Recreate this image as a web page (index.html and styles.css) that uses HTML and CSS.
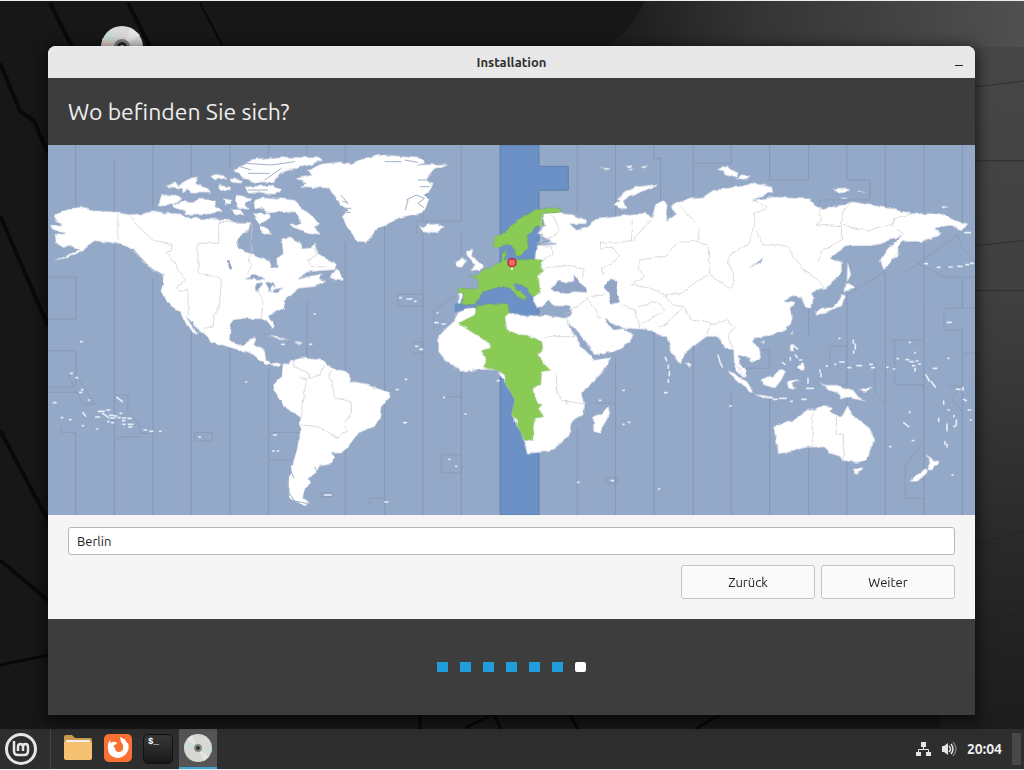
FILE: index.html
```html
<!DOCTYPE html>
<html lang="de">
<head>
<meta charset="utf-8">
<meta name="viewport" content="width=device-width, initial-scale=1">
<title>Installation</title>
<link rel="stylesheet" href="styles.css">
</head>
<body>
<main class="desktop">
  <svg class="wallpaper" viewBox="0 0 1024 729" preserveAspectRatio="none" aria-hidden="true">
    <defs>
      <linearGradient id="sheen" x1="0" y1="0" x2="0" y2="1">
        <stop offset="0" stop-color="#484848"/><stop offset=".4" stop-color="#404040"/><stop offset=".75" stop-color="#292929"/><stop offset="1" stop-color="#1c1c1c"/>
      </linearGradient>
      <linearGradient id="slope" x1="0" y1="0" x2="1" y2="0">
        <stop offset="0" stop-color="#1a1a1a"/><stop offset=".35" stop-color="#343434"/><stop offset="1" stop-color="#505050"/>
      </linearGradient>
    </defs>
    <rect width="1024" height="729" fill="#171717"/>
    <path d="M940 0H1024V729H940Z" fill="url(#sheen)"/>
    <path d="M645 0H1024V46H605Q632 30 645 0Z" fill="url(#slope)"/>
    <g fill="none" stroke="#090909" stroke-width="4">
      <path d="M50 2L72 46M128 2L150 46M0 62L20 110L34 120L48 152M0 215L48 325M0 430L48 520M0 560L48 600"/>
      <path d="M0 665L48 655M420 715V729M494 715L501 729M570 715L578 729M720 715L695 729M490 716L465 728" stroke-width="3"/>
      <path d="M200 2L222 44" stroke-width="2"/>
    </g>
    <path d="M975 86L1024 80M975 160H1024M975 245L1024 240M975 290H1024M975 545L1024 530M975 625L1024 610M890 729L1024 680" fill="none" stroke="#1c1c1c" opacity=".5"/>
  </svg>
  <svg class="disc-shortcut" viewBox="0 0 42 42" role="img" aria-label="Installationsmedium">
    <circle cx="21" cy="21" r="21" fill="#d9d9d9"/><path d="M21 21L1 14 8 5Z" fill="#c9ded6"/><path d="M21 21L0 21 2 12Z" fill="#e6d5ca"/><path d="M21 21L30 2 39 9Z" fill="#e6e6e6"/>
    <circle cx="21" cy="21" r="8" fill="#858585"/><circle cx="21" cy="21" r="5" fill="#292929"/><circle cx="21" cy="21" r="2" fill="#ddd"/>
  </svg>

  <section class="window" aria-label="Installation">
    <header class="titlebar">
      <span class="window-title">Installation</span>
      <button class="minimize" type="button" aria-label="Minimieren"></button>
    </header>
    <div class="heading"><h1>Wo befinden Sie sich?</h1></div>

    <svg class="map" viewBox="0 0 2781 1110" role="img" aria-label="Zeitzonenkarte, Berlin ausgewählt">
      <defs>
        <filter id="coast" x="0" y="0" width="2781" height="1110" filterUnits="userSpaceOnUse" color-interpolation-filters="sRGB">
          <feTurbulence type="fractalNoise" baseFrequency=".04" numOctaves="2" seed="4"/>
          <feDisplacementMap in="SourceGraphic" scale="13" xChannelSelector="R" yChannelSelector="G"/>
        </filter>
      </defs>
      <rect width="2781" height="1110" fill="#94a8c8"/>
      <path class="zone" d="M1356 0H1473V64H1561V136H1473V1110H1356Z"/>
      <path class="zone sea" d="M1220 478L1300 425 1400 425V500H1220Z"/>
      <path class="meridians" d="M83 0V190M83 397V523M83 617V721M83 860V1110M199 40V200M199 297V1110M315 0V200M315 400V1110M430 0V95M430 555V1110M546 0V70M546 610V1110M662 0V30M662 670V1110M777 0V30M777 470V640M892 0V50M892 290V690M892 900V1110M1010 240V1110M1125 30V228M1125 265V1110M1240 0V228M1240 265V330M1240 680V1110M1588 0V200M1588 850V1110M1703 0V215M1703 640V1110M1818 0V40H1838V180M1818 560V1110M1936 0V160M1936 600V1110M2050 0V55M2050 745V1110M2165 0V105M2165 760V1110M2282 0V105M2282 480V570M2282 910V1110M2397 0V105H2466V160M2397 450V1110M2512 0V190M2512 380V1110M2628 0V205M2628 290V1110M2743 0V235M2743 400V490M2743 560V1110"/>
      <path class="zone-lines" d="M0 397H83V523H0M0 617H83V690L140 777H105L60 690M0 726H75M0 742H88M205 750H240V800L275 840V865H315M275 875H220L200 888M40 845V862H83M440 862H493V888H440ZM662 862H755M662 945H730M820 1043H855V1055H820ZM965 1078V1060H1010V1095M1050 448H1125V484H1050ZM1105 265V228H1240M1158 555V495L1235 445M1090 592H1125V625H1090M1178 755H1240M1240 930H1180V984H1240M1936 55H2050M2165 105H2282M2316 190V165H2466M2512 380L2396 450M2730 270L2575 380M2730 270L2743 310 2781 350M2610 355L2690 397H2781M2688 490H2781M2688 490V555H2743V625H2781M2626 495V585H2530M2540 585V719H2626V895L2572 960V1060H2628V1110M2346 675V603H2396M2396 603V715L2350 745M2051 670H2164V615H2130M2481 650V745L2510 775M2697 723H2740L2710 760 2743 800M1640 775H1703M1672 998H1708V1015H1672Z"/>
      <g class="land" filter="url(#coast)">
        <path d="M15 212L60 190 95 186 130 196 190 199 245 208 290 205 315 196 350 203 400 206 415 216 460 220 500 222 540 225 570 230 610 232 600 258 580 268 568 290 575 310 605 325 640 340 665 345 672 365 690 368 688 340 705 325 700 280 726 275 756 290 761 310 791 308 801 295 811 325 841 345 866 360 861 375 816 378 776 382 751 402 776 395 826 385 810 400 836 408 801 425 756 430 741 440 716 460 706 490 661 510 666 520 680 545 672 552 655 530 640 522 616 522 590 520 560 525 548 540 545 585 565 600 590 597 605 582 625 577 618 600 650 617 655 645 670 658 690 652 703 662 680 667 650 657 610 625 560 612 520 600 487 590 480 575 455 560 415 515 430 540 455 570 440 562 415 540 395 498 375 488 350 465 340 440 345 400 335 385 300 365 265 330 240 305 205 297 180 292 140 288 115 305 100 320 60 338 10 350 60 330 95 312 70 305 45 308 25 295 20 270 50 265 15 255 5 240 45 238 15 220Z"/>
        <path d="M330 180L340 150 370 148 405 160 375 178 350 185ZM370 182L400 168 430 172 450 162 500 165 505 185 525 200 500 204 470 210 430 212 412 208 415 195 395 195ZM350 125L385 112 390 122 430 98 450 95 440 115 480 130 490 142 430 142 420 134 400 145 400 130ZM484 92L525 90 535 100 500 105ZM545 100L585 105 580 115 550 112ZM510 120L545 125 545 135 515 138ZM525 160L550 165 548 180 530 180ZM570 150L610 158 590 180 605 195 575 190 560 165ZM550 190L575 190 590 212 562 210ZM555 75L616 42 696 35 816 38 826 48 756 65 696 85 676 112 620 112 590 100ZM590 125L676 120 700 130 680 148 600 145ZM616 165L650 155 700 160 740 165 770 195 818 235 800 245 815 270 780 262 740 250 725 240 760 235 740 205 700 200 660 205 640 190 620 190ZM635 240L660 250 672 270 640 262ZM610 205L660 205 672 215 635 240ZM851 390L866 370 888 402 876 405 846 400Z"/>
        <path d="M741 100L791 90 776 75 826 55 876 50 911 55 946 38 1006 28 1126 40 1131 55 1106 60 1201 55 1156 75 1136 100 1156 115 1146 140 1131 150 1145 165 1131 190 1121 205 1056 218 1006 242 981 258 971 275 951 295 921 285 896 245 881 215 901 195 876 180 846 130 796 128 756 125 776 115ZM1111 240L1125 248 1140 238 1166 236 1191 245 1166 263 1126 262Z"/>
        <g transform="translate(1116 0)"><path d="M140 315L160 312 155 330 175 350 193 365 180 375 150 378 165 362 150 345 138 330ZM108 350L130 338 138 350 125 368 105 365Z"/></g>
        <path d="M1481 205L1516 203 1536 205 1576 208 1614 225 1611 237 1566 237 1586 255 1626 238 1646 222 1716 213 1756 205 1796 205 1811 222 1821 180 1846 165 1861 180 1856 228 1881 210 1871 180 1896 170 1926 158 1966 155 1996 135 2086 122 2106 112 2171 125 2176 140 2111 165 2176 155 2256 160 2286 160 2301 180 2321 190 2376 180 2416 170 2526 190 2596 205 2676 205 2736 232 2762 240 2741 255 2696 240 2661 250 2681 270 2616 290 2566 290 2551 310 2551 330 2506 375 2496 345 2521 305 2561 275 2536 282 2496 298 2466 303 2396 303 2346 340 2381 350 2381 385 2336 430 2316 432 2291 440 2296 465 2291 490 2274 488 2261 460 2236 452 2208 465 2241 475 2226 490 2236 520 2216 555 2176 570 2126 578 2116 590 2141 620 2136 640 2111 653 2096 640 2071 630 2076 655 2096 680 2096 698 2076 690 2058 655 2056 615 2031 610 2011 575 1976 575 1916 620 1896 660 1871 625 1856 575 1836 575 1811 555 1726 550 1671 520 1696 555 1726 550 1756 570 1746 595 1696 620 1638 630 1626 605 1586 560 1556 525 1571 505 1566 485 1516 483 1500 465 1471 490 1455 460 1460 345 1465 300 1510 290 1466 265 1490 240Z"/>
        <path d="M1251 493L1281 490 1376 505 1381 500 1411 510 1461 515 1496 510 1556 520 1571 555 1596 600 1626 630 1638 645 1691 637 1666 680 1626 720 1601 750 1611 780 1606 810 1571 830 1566 860 1546 890 1506 920 1441 925 1429 890 1391 810 1401 765 1371 715 1351 677 1311 673 1236 680 1191 645 1171 620 1171 570 1216 530 1231 500ZM1681 783L1686 805 1656 865 1636 860 1636 815 1661 805ZM1231 443H1242L1238 475H1229Z"/>
        <g transform="translate(0 555)"><path d="M705 105L735 90 760 83 830 90 840 105 870 118 905 128 905 155 960 165 1020 185 1028 200 1000 230 995 265 980 290 930 310 905 345 880 370 850 370 860 385 850 400 815 405 805 425 780 445 790 460 770 480 765 500 785 520 770 525 735 512 720 490 722 440 735 400 755 320 757 265 715 235 680 185 675 165 700 140ZM650 12L690 18 728 34 690 25ZM735 36L770 38 755 45Z"/></g>
        <g transform="translate(1776 495)"><path d="M400 350L460 330 500 300 525 300 550 285 575 290 570 305 600 320 610 315 622 282 640 315 690 355 705 390 680 450 650 458 610 452 600 440 570 430 550 412 500 412 460 425 415 432 410 400ZM638 473L667 473 655 495 645 490ZM856 430L868 440 882 453 900 453 875 482 862 474 870 460ZM856 475L868 482 850 500 830 515 808 514 825 498ZM258 180L285 190 340 235 340 248 310 230ZM340 252L400 260 400 266 365 264ZM365 205L400 200 425 175 438 182 425 210 405 235 370 225ZM440 215L490 208 455 222 470 240 445 235ZM535 218L555 225 590 225 640 240 655 260 682 275 650 268 620 262 600 268 600 255 570 240ZM655 242L700 230 690 242 670 248ZM450 105L462 100 460 125 450 128ZM470 165L490 160 495 175 485 180ZM138 155L152 165 145 178ZM460 58L458 72 450 75ZM360 95L375 93 370 103ZM285 165L298 172 305 190 320 203 308 202 292 185Z"/></g>
        <g transform="translate(2196 0)"><path d="M198 413L225 430 193 441ZM185 445L197 455 190 483 160 493 108 512 106 497 165 482ZM202 348L215 390 200 412ZM158 130L195 128 215 137 170 143ZM230 137L265 142 235 143ZM180 155L210 160 190 162ZM482 183L510 185 490 190Z"/></g>
        <g transform="translate(1656 0)"><path d="M40 180L60 165 50 160 80 138 110 125 170 117 170 124 130 138 90 153 70 168 80 192 60 190ZM350 73L385 62 395 75 415 85 410 97 375 88 370 78ZM410 100L425 88 455 97 430 104ZM0 70L30 68 20 75ZM70 62L100 57 90 68ZM120 65L145 62 135 70ZM75 73L105 71 95 77Z"/></g>
      </g>
      <g class="water" filter="url(#coast)">
        <path d="M1511 435L1531 405 1551 415 1576 405 1581 390 1591 410 1616 430 1616 442 1576 440 1536 445ZM1666 420L1686 405 1708 405 1706 430 1716 470 1691 478 1681 445 1666 430ZM2101 368L2126 355 2144 335 2141 352 2116 365ZM593 402L620 388 652 402ZM622 412L642 410 632 440H622ZM652 408L682 418 685 428 672 420 665 440ZM660 440L685 432 710 428 690 440ZM535 348L543 348 553 370 545 375ZM1466 297L1525 293V298L1466 302Z"/>
      </g>
      <g class="selected" filter="url(#coast)">
        <g transform="translate(1116 0)"><path d="M370 345L360 365 370 375 355 395 360 445 335 455 325 432 305 420 290 413 278 418 290 430 308 445 322 458 310 464 292 452 270 430 250 425 215 433 185 440 180 460 165 478 140 480 128 478 130 445 115 442 115 430 165 432 180 425 170 400 148 395 175 390 185 378 220 362 245 350 246 322 260 318 255 345 290 348 330 342ZM222 275L245 268 280 240 310 215 350 195 400 188 425 195 420 203 365 205 370 240 345 250 318 275 325 300 305 330 290 335 275 300 262 298 230 312 222 300Z"/></g>
        <g transform="translate(1026 405)"><path d="M260 75L350 70 355 100 345 115 350 150 380 162 400 162 455 185 458 205 445 225 460 250 480 270 455 275 452 310 428 325 430 345 440 375 458 372 445 385 460 410 432 415 428 480 405 482 385 450 380 420 365 405 375 360 345 310 345 285 325 272 285 262 285 235 275 212 300 205 300 190 205 130 255 105Z"/></g>
      </g>
      <g class="inlets"><path d="M878 150L900 175 884 168M888 190H910M892 202H908M1075 165L1105 150 1130 160 1110 175 1128 188M1072 195L1080 165M1110 105H1145M1115 125H1145M1010 50H1060M1070 45L1110 52M590 55L670 60 740 50M600 85H665M650 105L700 70M600 135H660M560 60L610 75M235 305L262 325 280 350 330 385 350 390M255 310L275 335 300 360M722 985L720 1040 740 1068 780 1076M730 980L738 1000M800 965L810 985"/></g>
      <g class="borders" filter="url(#coast)">
        <path d="M210 200V293M245 208L270 245 320 290 372 298 370 320 353 320 385 365 415 410 387 425 390 437H420V512M610 232H512V295H450V387L495 390 520 402 515 475 498 515 495 545 470 550M610 232V325L600 345 612 360 598 390M628 440L645 470 640 522M801 295L806 330 780 345 790 365 830 365M735 645V665L775 680 785 700 815 690 830 660M760 820L775 700 757 700M850 675L845 700 865 760 910 770 910 805 885 840 900 860 870 878 850 870 810 845 760 840"/>
        <path d="M1481 205V300M1514 210L1535 250 1525 270 1465 295M1480 300L1510 305 1512 330 1490 345M1475 370L1580 360 1605 375 1604 400M1756 225L1750 285 1718 292 1658 292 1656 310 1695 310 1715 335 1690 355 1660 370 1666 390M1756 285L1806 225M1776 345L1850 335 1885 295 1945 288 1980 300 1985 390 1945 410 1900 445 1850 450 1810 430 1750 420 1790 395 1770 370ZM1896 185L1930 220 1955 250 1950 285M2125 170L2160 190 2116 205 2120 240 2100 300 2055 320 2040 350 2060 395 2050 432 2015 410 1980 390M2125 260L2145 300 2216 300 2240 340 2275 380 2310 405 2330 430M2316 190V225L2305 240 2380 245 2380 285 2320 320 2310 350M2416 170L2390 190 2380 240 2460 258 2530 235 2565 270M2596 205L2540 220 2535 240M1770 485L1830 470 1850 495 1780 540M1855 450L1875 480 1905 485 1860 530 1835 550M1910 490L1925 520 2000 540 2035 525 2060 545 2040 575 2055 610M1985 535L1980 570M1550 510L1620 460 1655 520M1620 455L1670 450M1720 480L1765 500 1775 550M1485 575H1580M1526 690V740L1540 765 1610 777M1556 764V780M2293 805V905M2362 805V868H2386V950"/>
      </g>
      <g class="islets">
        <path d="M98 590h4M68 685h5M84 698h5M101 734h4M95 742h6M121 765h4M16 773h8M207 757l16 13M105 803l8 10M40 818h4M65 824h4M103 842h3M145 852h4M143 816h12M151 799h18M164 805l18 13M176 795h10M184 811h12M199 813h8M216 805h5M211 818h5M188 819h13M223 819h10M224 827h6M240 820h10M179 830h4M191 833h6M225 838h6M241 838h14M242 846h10M288 855h8M306 859h8M335 859h4M453 876h4M593 711h3M676 870h10M674 918h5M688 918h4M830 1050h20M1010 1071h10M1045 734h5M701 598h8M785 598h6M798 507h4M1055 458h5M1077 462h15M1100 469h4M1167 504h3M1160 533h10M1182 537h10M1103 604h6M1115 613h9M1072 703h4M1046 734h4M1067 833h8M1186 757h4M1251 807h3M1203 943h3M1223 964h3M1348 707h5M1725 736h4M1654 766h4M1725 838h3M1741 832h4M1589 1012h4M1690 1007h6M1831 1032h4M2045 783h5M2010 631l5 15M2015 650l8 16M1852 637l4 10M1861 660v10M1864 680v12M1861 704v8M1850 743h7M2234 600l15 12M2242 630l6 8M2254 645h8M2203 653l8 5M2227 638v8M2373 580h3M2416 585v10M2422 597v15M2417 618v6M2316 675v5M2319 685v10M2334 663h5M2360 658h3M2375 651h14M2400 668h8M2427 662h14M2465 658h8M2471 668h8M2516 667h4M2536 672h4M2548 641h3M2584 592h3M2574 644h8M2586 650h10M2594 662h6M2604 648h6M2601 670v8M2612 657h5M2601 622v3M2656 670h10M2634 690l10 18M2650 710l12 16M2700 640h3M2725 733h12M2745 727v9M2747 763l8 4M2687 768v10M2700 795h4M2672 820v9M2697 837v20M2718 812v3M2725 825v16M2717 844h5M2760 795h8M2766 825h4M2691 890v8M2697 898v8M2712 990h4M2585 800v3M2567 833l15 12M2593 887h4M2525 905h3M2698 532h12M2630 356h8M2668 367h8M2703 366h10M2730 364h12M2754 359h8M2768 355h8M2751 263h16M2176 763h12M2195 760h20M2228 769h5M2262 763h12M2280 700v15M2276 730h20"/>
      </g>
      <g class="pin"><circle cx="1392" cy="353" r="12"/><path d="M1392 367V376"/></g>
    </svg>

    <form class="form">
      <input class="city" type="text" value="Berlin" aria-label="Zeitzone">
      <div class="actions">
        <button class="btn" type="button">Zurück</button>
        <button class="btn" type="button">Weiter</button>
      </div>
    </form>
    <footer class="progress" aria-label="Schritt 7 von 7">
      <span class="step"></span><span class="step"></span><span class="step"></span><span class="step"></span><span class="step"></span><span class="step"></span><span class="step current"></span>
    </footer>
  </section>
</main>

<nav class="taskbar" aria-label="Leiste">
  <button class="menu" type="button" aria-label="Menü">
    <svg width="34" height="34" viewBox="0 0 34 34" fill="none" stroke="#e6e6e6" stroke-width="3"><circle cx="17" cy="17" r="14.5"/><path d="M10 9V19Q10 23 14 23H20Q24 23 24 19V15Q24 12 21.500 12Q19 12 19 15V19M19 15Q19 12 16.500 12Q14 12 14 15V19" stroke-width="2.500"/></svg>
  </button>
  <button class="task" type="button" aria-label="Dateien">
    <svg width="30" height="30" viewBox="0 0 30 30"><path d="M1 3Q1 1 3 1H9L12 4H27Q29 4 29 6V12H1Z" fill="#c99a4c"/><path d="M3 6H27V12H3Z" fill="#eee"/><path d="M1 8H29V24Q29 26 27 26H3Q1 26 1 24Z" fill="#f6c170"/></svg>
  </button>
  <button class="task" type="button" aria-label="Firefox">
    <svg width="30" height="30" viewBox="0 0 30 30"><rect x="1" width="28" height="28" rx="5" fill="#fa7135"/><path d="M7 6Q7 8 8 9Q10 7 12 8Q14 8 14 10L11 11Q10 13 12 14Q12 18 16 18Q19 18 20 15Q21 11 18 8L17 3Q23 5 24 9L25 9Q27 15 23 20Q19 24 14 24Q8 23 6 19Q4 14 5 10Z" fill="#fff"/></svg>
  </button>
  <button class="task" type="button" aria-label="Terminal"><span class="prompt">$_</span></button>
  <button class="task active" type="button" aria-label="Installation">
    <svg width="30" height="30" viewBox="0 0 30 30"><circle cx="15" cy="15" r="14" fill="#d8d8d3"/><path d="M15 15L4 6 9 2ZM15 15L26 24 21 28Z" fill="#e6e4e0"/><path d="M15 15L1 15 2 10ZM15 15L28 20 29 15Z" fill="#c9ddd9"/><circle cx="15" cy="15" r="4" fill="#888"/><circle cx="15" cy="15" r="2" fill="#333"/></svg>
  </button>
  <div class="tray">
    <svg width="16" height="16" viewBox="0 0 16 16" role="img" aria-label="Netzwerk"><path d="M6 1H11V6H6ZM1 11H6V15H1ZM11 11H16V15H11Z" fill="#e6e6e6"/><path d="M8.500 6V9M3.500 11V8.500H13.500V11" fill="none" stroke="#e6e6e6"/></svg>
    <svg width="16" height="16" viewBox="0 0 16 16" role="img" aria-label="Lautstärke"><path d="M1 5H3L7 2V14L3 11H1Z" fill="#e6e6e6"/><path d="M8 5Q11 8 8 11M10 3Q14 8 10 13" fill="none" stroke="#e6e6e6" stroke-width="1.500"/><path d="M12 1Q18 8 12 15" fill="none" stroke="#777" stroke-width="1.500"/></svg>
    <time class="clock">20:04</time>
    <span class="show-desktop"></span>
  </div>
</nav>
</body>
</html>
```
FILE: styles.css
```css
* { box-sizing: border-box; }
html, body { height: 100%; margin: 0; }
body {
  display: flex;
  flex-direction: column;
  border-top: 1px solid #e9efed;
  border-bottom: 1px solid #f2f2f2;
  background: #191919;
  color: #222;
  font-family: Ubuntu, "Noto Sans", sans-serif;
  font-size: 13px;
}
button, input { font: inherit; color: inherit; }
.desktop { position: relative; flex: 1; padding: 45px 49px 14px 48px; }
.wallpaper { position: absolute; inset: 0; width: 100%; height: 100%; }
.disc-shortcut { position: absolute; left: 101px; top: 25px; width: 42px; height: 42px; }
.window {
  position: relative;
  display: flex;
  flex-direction: column;
  overflow: hidden;
  border-radius: 8px 8px 0 0;
  background: #f5f5f5;
  box-shadow: 0 3px 14px 3px rgba(0, 0, 0, .6);
}
.titlebar {
  display: grid;
  grid-template-columns: 1fr auto 1fr;
  align-items: center;
  height: 32px;
  padding: 0 12px;
  background: #e8e8e8;
}
.window-title { grid-column: 2; font-weight: 700; color: #303030; }
.minimize {
  justify-self: end;
  display: flex;
  align-items: flex-end;
  justify-content: flex-end;
  width: 10px;
  height: 10px;
  padding: 0;
  border: 0;
  background: none;
}
.minimize::after { content: ""; width: 8px; height: 1px; margin-bottom: 1px; background: #222; }
.heading { padding: 18px 20px 17px; background: #3d3d3d; color: #eee; }
h1 { margin: 0; font-size: 23px; line-height: 32px; font-weight: 400; }
.map { display: block; width: 100%; height: auto; }
.zone { fill: #6c91c6; stroke: #52769f; stroke-width: 2; }
.zone.sea { stroke: none; }
.meridians, .zone-lines { fill: none; stroke: #8497b5; stroke-width: 3; }
.zone-lines { stroke: #899cb9; }
.land { fill: #fff; stroke: #8799b2; stroke-width: 1; }
.water { fill: #90a4c6; }
.selected { fill: #8acb55; stroke: #6a9b62; stroke-width: 1; }
.inlets { fill: none; stroke: #a3b1c8; stroke-width: 3; }
.borders { fill: none; stroke: #c8c8c8; stroke-width: 2; }
.islets { fill: none; stroke: #e6edf5; stroke-width: 5; stroke-linecap: round; }
.pin { fill: #f06868; stroke: #b32029; stroke-width: 4; }
.pin path { stroke: #fff; }
.form { display: flex; flex-direction: column; gap: 10px; padding: 12px 20px 20px; }
.city {
  width: 100%;
  height: 28px;
  padding: 0 8px;
  border: 1px solid #b8b8b8;
  border-radius: 3px;
  background: #fff;
}
.actions { display: flex; justify-content: flex-end; gap: 6px; }
.btn {
  width: 134px;
  height: 34px;
  border: 1px solid #c4c4c4;
  border-radius: 3px;
  background: #fafafa;
}
.progress {
  display: flex;
  align-items: center;
  justify-content: center;
  gap: 12px;
  height: 96px;
  background: #3d3d3d;
}
.step { width: 11px; height: 10px; background: #219ddc; }
.step.current { border-radius: 2px; background: #fff; }
.taskbar { display: flex; height: 40px; background: #2e2e2e; color: #eee; }
.menu, .task {
  display: flex;
  align-items: center;
  justify-content: center;
  padding: 0;
  border: 0;
  background: none;
}
.menu { width: 51px; padding-right: 8px; margin-right: 8px; border-right: 1px solid #444; }
.task { width: 38px; margin-right: 2px; }
.task.active { border-bottom: 2px solid #3ea4d8; background: #555; }
.prompt {
  width: 30px;
  height: 30px;
  padding: 2px 4px;
  border: 1px solid #111;
  border-radius: 5px;
  background: linear-gradient(#373737, #191919);
  color: #fff;
  font: 700 9px/10px "Liberation Mono", monospace;
  text-align: left;
}
.tray { display: flex; align-items: center; gap: 10px; margin-left: auto; }
.clock { font-size: 14px; font-weight: 700; }
.show-desktop { width: 9px; height: 32px; margin-right: 3px; background: #484848; }
```
